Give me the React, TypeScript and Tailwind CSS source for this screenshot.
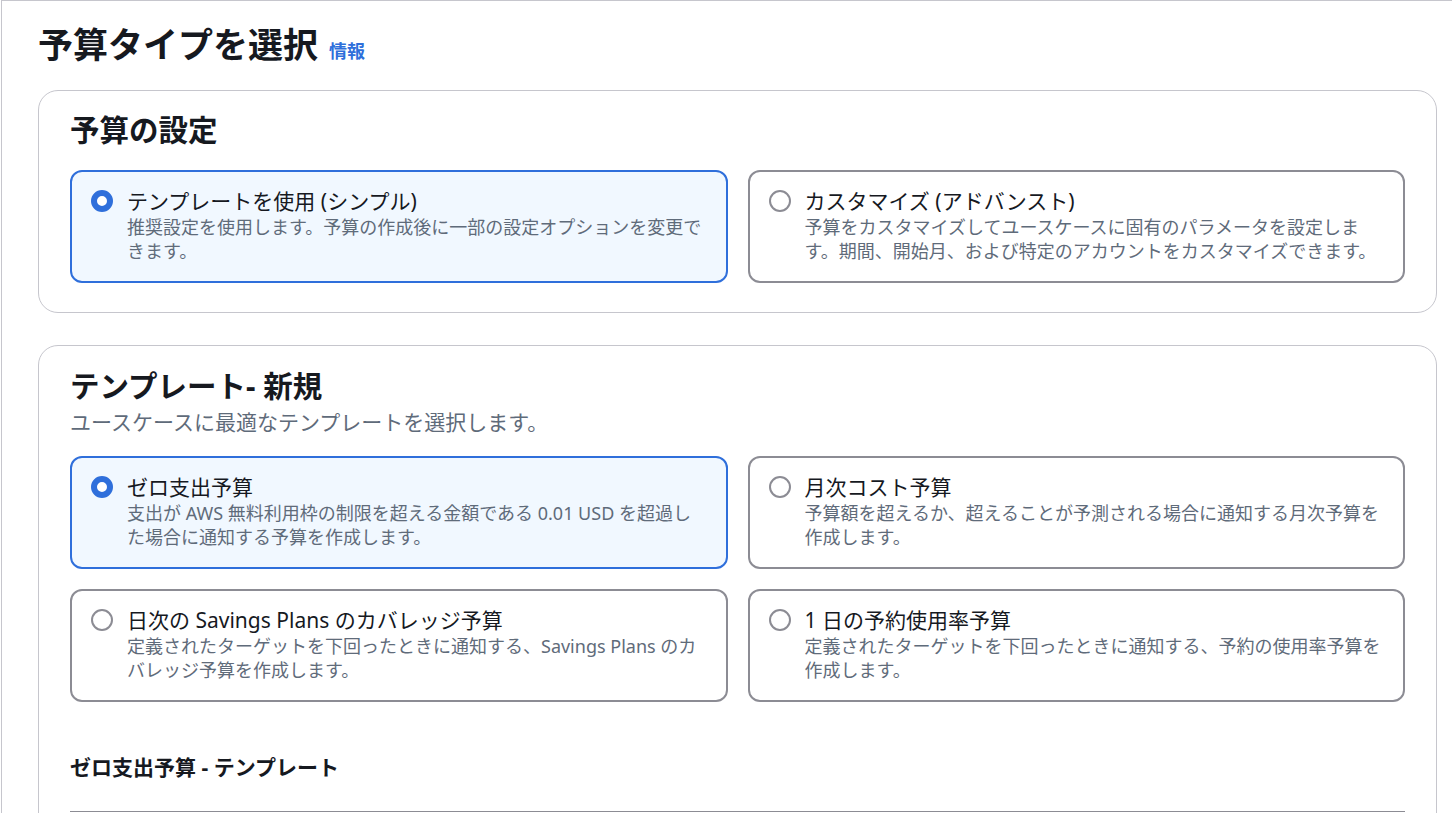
import React from "react";

type Option = {
  title: string;
  description: string;
  selected?: boolean;
};

const budgetModes: Option[] = [
  {
    title: "テンプレートを使用 (シンプル)",
    description: "推奨設定を使用します。予算の作成後に一部の設定オプションを変更できます。",
    selected: true,
  },
  {
    title: "カスタマイズ (アドバンスト)",
    description:
      "予算をカスタマイズしてユースケースに固有のパラメータを設定します。期間、開始月、および特定のアカウントをカスタマイズできます。",
  },
];

const templates: Option[] = [
  {
    title: "ゼロ支出予算",
    description: "支出が AWS 無料利用枠の制限を超える金額である 0.01 USD を超過した場合に通知する予算を作成します。",
    selected: true,
  },
  {
    title: "月次コスト予算",
    description: "予算額を超えるか、超えることが予測される場合に通知する月次予算を作成します。",
  },
  {
    title: "日次の Savings Plans のカバレッジ予算",
    description: "定義されたターゲットを下回ったときに通知する、Savings Plans のカバレッジ予算を作成します。",
  },
  {
    title: "1 日の予約使用率予算",
    description: "定義されたターゲットを下回ったときに通知する、予約の使用率予算を作成します。",
  },
];

function Radio({ checked }: { checked?: boolean }) {
  if (checked) {
    return <span className="mt-[3px] block h-[22px] w-[22px] shrink-0 rounded-full border-[6px] border-[#2f6fdb] bg-white" />;
  }
  return <span className="mt-[3px] block h-[22px] w-[22px] shrink-0 rounded-full border-[2.5px] border-[#8c8c94] bg-white" />;
}

function OptionCard({ option }: { option: Option }) {
  return (
    <div
      className={
        option.selected
          ? "flex gap-[14px] rounded-[12px] border-2 border-[#2f6fdb] bg-[#f1f8ff] pt-[15px] pb-[18px] pl-[19px] pr-[22px]"
          : "flex gap-[14px] rounded-[12px] border-2 border-[#8c8c94] bg-white pt-[15px] pb-[18px] pl-[19px] pr-[22px]"
      }
    >
      <Radio checked={option.selected} />
      <div>
        <div className="text-[21px] leading-[28px] text-[#16191f]">{option.title}</div>
        <p className="text-[18px] leading-[24px] text-[#5f6b7a]">{option.description}</p>
      </div>
    </div>
  );
}

export default function App() {
  return (
    <div
      className="ml-px min-h-[813px] overflow-hidden border-t border-l border-[#c6c6cd] bg-white pl-[36px] pr-[15px] pt-[22px]"
      style={{ fontFamily: '"Noto Sans", "Noto Sans CJK JP", sans-serif' }}
    >
      <div className="flex items-baseline gap-[11px]">
        <h1 className="text-[35px] font-bold leading-[44px] text-[#16191f]">予算タイプを選択</h1>
        <a className="text-[18px] font-bold text-[#2f6fdb]">情報</a>
      </div>

      <section className="mt-[23px] rounded-[20px] border border-[#c6c6cd] px-[31px] pt-[21px] pb-[29px]">
        <h2 className="text-[29.5px] font-bold leading-[36px] text-[#16191f]">予算の設定</h2>
        <div className="mt-[22px] grid grid-cols-2 gap-5">
          {budgetModes.map((o) => (
            <OptionCard key={o.title} option={o} />
          ))}
        </div>
      </section>

      <section className="mt-8 rounded-[20px] border border-[#c6c6cd] px-[31px] pt-[22px] pb-10">
        <h2 className="text-[29.5px] font-bold leading-[36px] text-[#16191f]">テンプレート- 新規</h2>
        <p className="mt-[4px] text-[21px] leading-[28px] text-[#5f6b7a]">ユースケースに最適なテンプレートを選択します。</p>
        <div className="mt-5 grid grid-cols-2 gap-5">
          {templates.map((o) => (
            <OptionCard key={o.title} option={o} />
          ))}
        </div>
        <h3 className="mt-[51px] text-[21px] font-bold leading-[28px] text-[#16191f]">ゼロ支出予算 - テンプレート</h3>
        <div className="mt-[30px] border-t border-[#8c8c94]" />
        <div className="h-40" />
      </section>
    </div>
  );
}
